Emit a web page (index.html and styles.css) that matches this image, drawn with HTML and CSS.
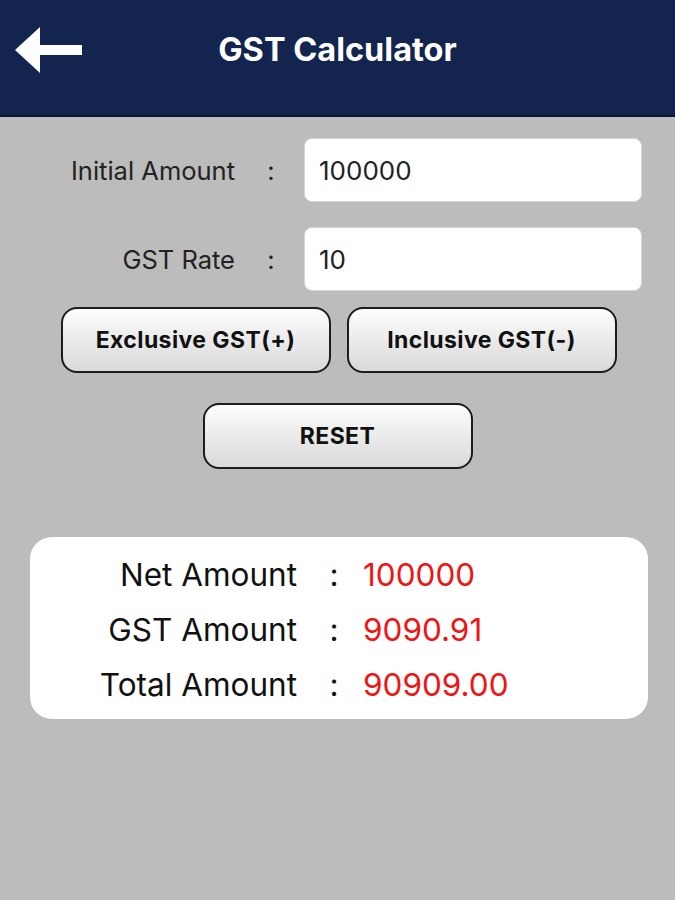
FILE: index.html
```html
<!DOCTYPE html>
<html>
<head>
  <title>GST Calculator</title>
  <link rel="stylesheet" href="styles.css">
</head>
<body>
  <header class="topbar">
    <div class="back">
      <svg width="70" height="46" viewBox="0 0 70 46">
        <polygon points="2,23 27,0 27,18 69,18 69,28 27,28 27,46" fill="#fff"/>
      </svg>
    </div>
    <h1 class="title">GST Calculator</h1>
    <div></div>
  </header>

  <div class="form">
    <div class="field">
      <label class="field-label">Initial Amount</label>
      <span class="colon">:</span>
      <input class="field-input" type="text" value="100000">
    </div>
    <div class="field">
      <label class="field-label">GST Rate</label>
      <span class="colon">:</span>
      <input class="field-input" type="text" value="10">
    </div>
  </div>

  <div class="btn-row">
    <button class="btn">Exclusive GST(+)</button>
    <button class="btn">Inclusive GST(-)</button>
  </div>
  <div class="btn-row reset-row">
    <button class="btn">RESET</button>
  </div>

  <div class="result">
    <div class="result-row">
      <span class="result-label">Net Amount</span>
      <span class="result-colon">:</span>
      <span class="result-value">100000</span>
    </div>
    <div class="result-row">
      <span class="result-label">GST Amount</span>
      <span class="result-colon">:</span>
      <span class="result-value">9090.91</span>
    </div>
    <div class="result-row">
      <span class="result-label">Total Amount</span>
      <span class="result-colon">:</span>
      <span class="result-value">90909.00</span>
    </div>
  </div>
</body>
</html>
```

FILE: styles.css
```css
body {
  margin: 0;
  background-color: #bcbcbc;
  font-family: Inter, "Liberation Sans", sans-serif;
  min-height: 900px;
}

.topbar {
  display: grid;
  grid-template-columns: 1fr auto 1fr;
  align-items: center;
  height: 117px;
  box-sizing: border-box;
  padding-top: 27px;
  padding-bottom: 42px;
  background-color: #13244f;
  border-bottom: 2px solid #0b1638;
}

.back {
  padding-left: 13px;
  display: flex;
}

.title {
  margin: 0;
  color: #fff;
  font-size: 32.5px;
  font-weight: 700;
  line-height: 46px;
}

.form {
  margin-top: 21px;
  display: flex;
  flex-direction: column;
  gap: 25px;
}

.field {
  display: grid;
  grid-template-columns: 235px 69px 338px;
  align-items: center;
  color: #222;
  font-size: 25.5px;
}

.field-label {
  text-align: right;
}

.colon {
  text-align: center;
  padding-left: 3px;
}

.field-input {
  height: 64px;
  box-sizing: border-box;
  border: 1px solid #d6d6d6;
  border-radius: 8px;
  background: #fff;
  padding: 0 14px;
  font-family: Inter, "Liberation Sans", sans-serif;
  font-size: 26px;
  color: #222;
  outline: none;
}

.btn-row {
  display: flex;
  justify-content: center;
  gap: 16px;
  margin-top: 16px;
  padding-left: 2px;
}

.reset-row {
  margin-top: 30px;
  padding-left: 0;
}

.btn {
  width: 270px;
  height: 66px;
  border: 2px solid #1c1c1c;
  border-radius: 16px;
  background: linear-gradient(#fdfdfd, #d9d9d9);
  font-family: Inter, "Liberation Sans", sans-serif;
  font-size: 23px;
  font-weight: 700;
  letter-spacing: 0.4px;
  color: #111;
}

.result {
  margin: 68px 27px 0 30px;
  padding: 10px 0 7px;
  background: #fff;
  border-radius: 22px;
}

.result-row {
  display: grid;
  grid-template-columns: 267px 66px 1fr;
  line-height: 55px;
  font-size: 31.5px;
}

.result-label {
  text-align: right;
  color: #111;
}

.result-colon {
  text-align: center;
  padding-left: 8px;
  color: #111;
}

.result-value {
  color: #f01414;
}
```
